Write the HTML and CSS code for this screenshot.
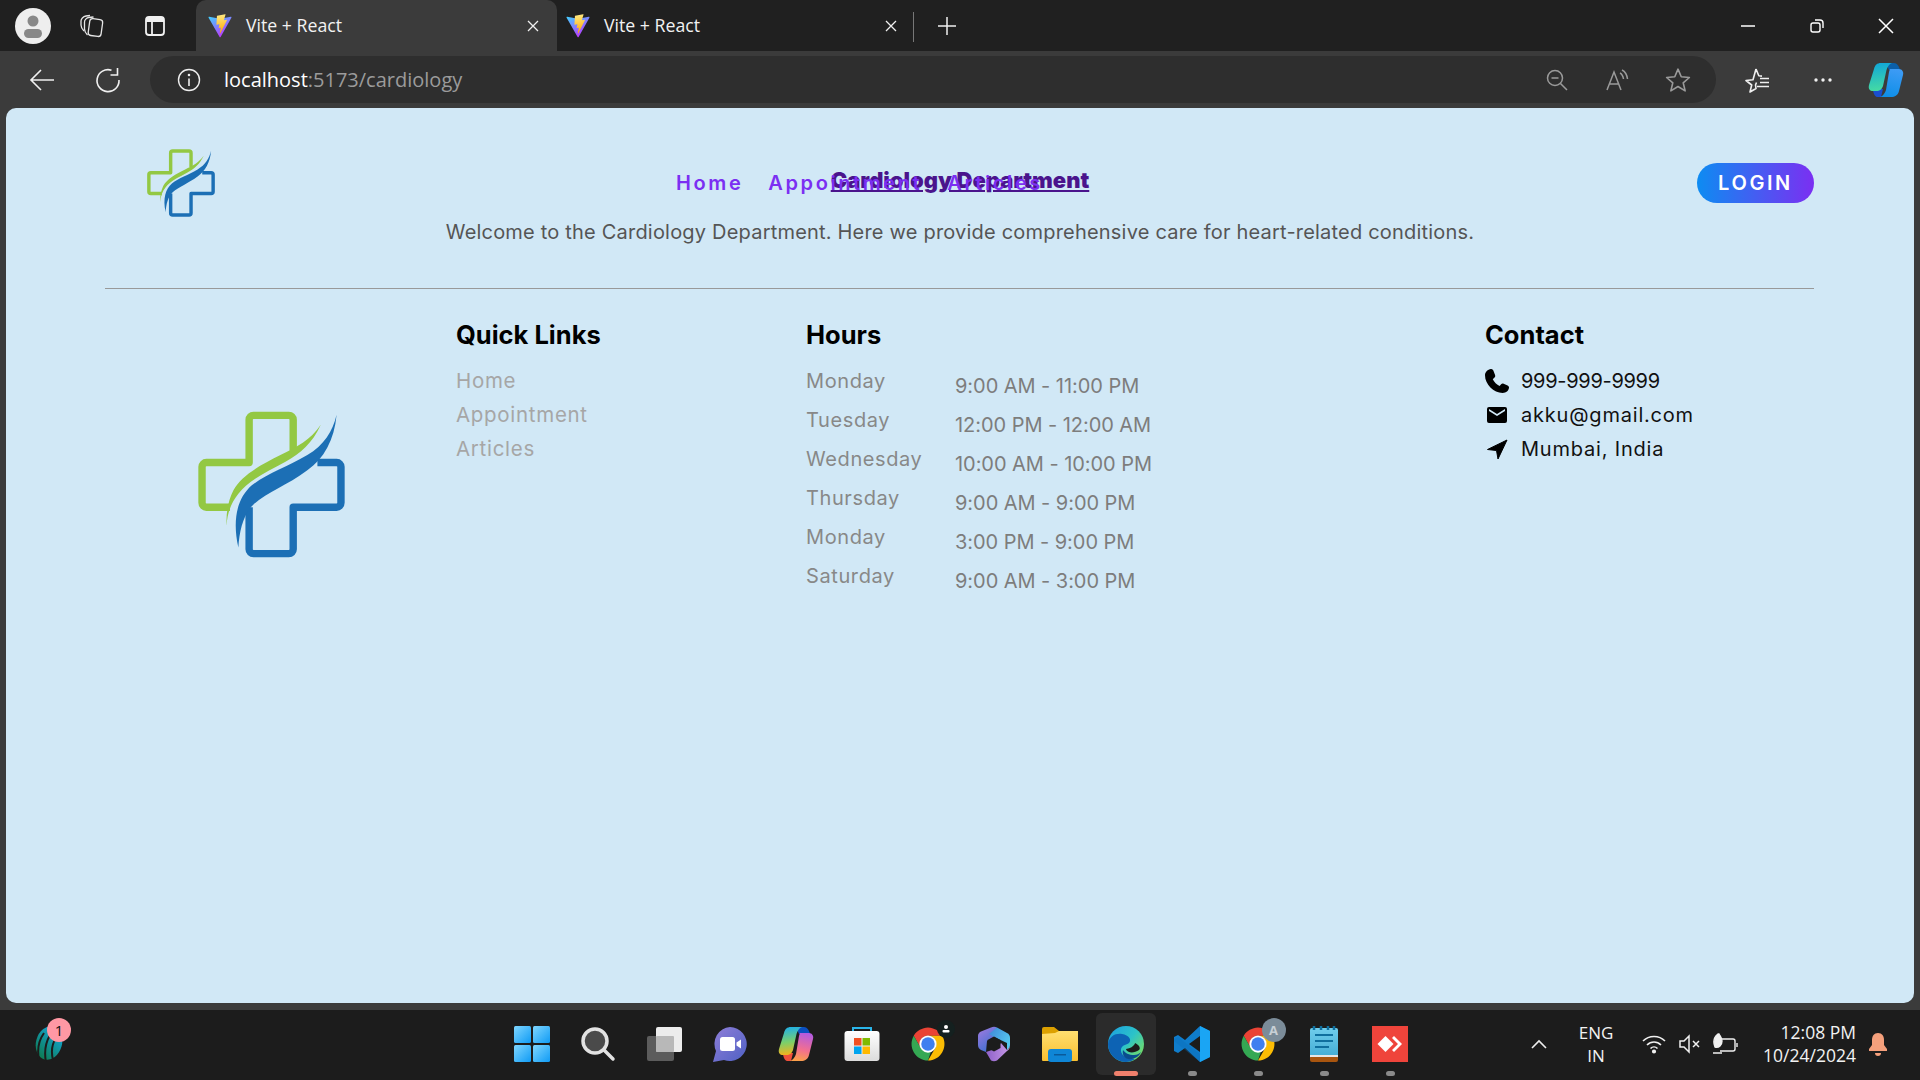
FILE: index.html
```html
<!DOCTYPE html>
<html lang="en">
<head>
  <meta charset="UTF-8" />
  <title>Vite + React</title>
  <link rel="stylesheet" href="styles.css">
</head>
<body>

  <!-- shared icon shapes -->
  <svg class="sprite" aria-hidden="true">
    <defs>
      <linearGradient id="viteA" x1="0" y1="0" x2="0.6" y2="1"><stop offset="0" stop-color="#41d1ff"/><stop offset="1" stop-color="#bd34fe"/></linearGradient>
      <linearGradient id="viteB" x1="0.4" y1="0" x2="0.5" y2="1"><stop offset="0" stop-color="#ffea83"/><stop offset="1" stop-color="#ffa800"/></linearGradient>
      <linearGradient id="winG" x1="0" y1="0" x2="1" y2="1"><stop offset="0" stop-color="#7fd6ff"/><stop offset="1" stop-color="#0f9bf5"/></linearGradient>
      <linearGradient id="meetG" x1="0" y1="0" x2="1" y2="1"><stop offset="0" stop-color="#8f7ed8"/><stop offset="1" stop-color="#4f61c4"/></linearGradient>
      <linearGradient id="copA" x1="0.3" y1="0" x2="0.4" y2="1"><stop offset="0" stop-color="#1fb0e8"/><stop offset="0.55" stop-color="#7bd06a"/><stop offset="1" stop-color="#f5b21c"/></linearGradient>
      <linearGradient id="copB" x1="0.6" y1="0" x2="0.4" y2="1"><stop offset="0" stop-color="#b35be0"/><stop offset="0.6" stop-color="#f4708e"/><stop offset="1" stop-color="#fba04a"/></linearGradient>
      <linearGradient id="copC" x1="0.3" y1="0" x2="0.4" y2="1"><stop offset="0" stop-color="#10a7d8"/><stop offset="1" stop-color="#46dba2"/></linearGradient>
      <linearGradient id="copD" x1="0.6" y1="0" x2="0.4" y2="1"><stop offset="0" stop-color="#3d9bf5"/><stop offset="1" stop-color="#0f8fe8"/></linearGradient>
      <linearGradient id="storeG" x1="0" y1="0" x2="0" y2="1"><stop offset="0" stop-color="#ffffff"/><stop offset="1" stop-color="#dcdcdc"/></linearGradient>
      <linearGradient id="m365A" x1="0" y1="0" x2="0.6" y2="1"><stop offset="0" stop-color="#a57be0"/><stop offset="1" stop-color="#3d6fd0"/></linearGradient>
      <linearGradient id="m365B" x1="0" y1="0" x2="1" y2="0.6"><stop offset="0" stop-color="#3f86d8"/><stop offset="1" stop-color="#55c8ee"/></linearGradient>
      <linearGradient id="m365C" x1="0" y1="0.5" x2="1" y2="0.5"><stop offset="0" stop-color="#8d5fc8"/><stop offset="1" stop-color="#c99be8"/></linearGradient>
      <linearGradient id="folderG" x1="0" y1="0" x2="0" y2="1"><stop offset="0" stop-color="#ffdf70"/><stop offset="1" stop-color="#f9bf30"/></linearGradient>
      <linearGradient id="edgeG" x1="0" y1="0" x2="1" y2="0.8"><stop offset="0" stop-color="#1b9de2"/><stop offset="0.55" stop-color="#2cc3c8"/><stop offset="1" stop-color="#7ade5c"/></linearGradient>
      <linearGradient id="padG" x1="0" y1="0" x2="0" y2="1"><stop offset="0" stop-color="#6fcdec"/><stop offset="1" stop-color="#3fa9d2"/></linearGradient>
      <linearGradient id="leafG" x1="0.7" y1="0" x2="0.3" y2="1"><stop offset="0" stop-color="#13a9e0"/><stop offset="1" stop-color="#0e7a50"/></linearGradient>

      <symbol id="vite" viewBox="0 0 410 404">
        <path fill="url(#viteA)" d="M399.641 59.525L215.643 388.545C211.844 395.338 202.084 395.378 198.228 388.618L10.582 59.556C6.381 52.19 12.68 43.266 21.028 44.759L205.223 77.682C206.398 77.892 207.601 77.89 208.776 77.676L389.119 44.806C397.439 43.289 403.768 52.143 399.641 59.525Z"/>
        <path fill="url(#viteB)" d="M292.965 1.574L156.801 28.255C154.563 28.694 152.906 30.59 152.771 32.866L144.395 174.33C144.198 177.662 147.258 180.248 150.51 179.498L188.42 170.749C191.967 169.931 195.172 173.055 194.443 176.622L183.18 231.775C182.422 235.487 185.907 238.661 189.532 237.56L212.947 230.446C216.577 229.344 220.065 232.527 219.297 236.242L201.398 322.875C200.278 328.294 207.486 331.249 210.492 326.603L212.5 323.5L323.454 102.072C325.312 98.365 322.108 94.137 318.036 94.923L279.014 102.454C275.347 103.161 272.227 99.746 273.262 96.158L298.731 7.867C299.767 4.273 296.636 0.855 292.965 1.574Z"/>
      </symbol>

      <symbol id="cross" viewBox="85 65 437 435">
        <path fill="none" stroke="#93c843" stroke-width="22" stroke-linejoin="round" d="M368 182V90a13 13 0 0 0-13-13H250a13 13 0 0 0-13 13V217H110a13 13 0 0 0-13 13V337a13 13 0 0 0 13 13H180"/>
        <path fill="none" stroke="#1c6fb5" stroke-width="22" stroke-linejoin="round" d="M440 217H497a13 13 0 0 1 13 13V337a13 13 0 0 1-13 13H368V475a13 13 0 0 1-13 13H250a13 13 0 0 1-13-13V350"/>
        <path fill="#1c6fb5" d="M497 75C485 125 460 165 410 195C350 230 290 250 245 285C205 320 185 380 205 470C208 420 220 370 250 342C290 305 350 285 410 240C460 205 490 150 497 75Z"/>
        <path fill="#93c843" d="M450 105C420 150 380 170 330 195C270 225 215 255 190 300C175 330 168 365 170 405C172 365 185 335 205 310C235 270 290 245 345 215C390 190 425 160 450 105Z"/>
      </symbol>

      <symbol id="chrome" viewBox="0 0 48 48">
        <path fill="#ea4335" d="M5 13A22 22 0 0 1 43 13H24A11 11 0 0 0 14.5 29.5Z"/>
        <path fill="#34a853" d="M5 13L14.5 29.5A11 11 0 0 0 28 34L24 46A22 22 0 0 1 5 13Z"/>
        <path fill="#fbbc04" d="M43 13A22 22 0 0 1 24 46L33.5 29.5A11 11 0 0 0 24 13Z"/>
        <circle cx="24" cy="24" r="11.5" fill="#fff"/>
        <circle cx="24" cy="24" r="9" fill="#3f7ff0"/>
      </symbol>
    </defs>
  </svg>

  <!-- Tab strip -->
  <div class="tabstrip">
    <div class="profile">
      <svg viewBox="0 0 36 36" width="36" height="36"><circle cx="18" cy="18" r="18" fill="#eee"/><circle cx="18" cy="13" r="5.5" fill="#888"/><rect x="9" y="21" width="18" height="9" rx="4.5" fill="#888"/></svg>
    </div>
    <div class="strip-btn">
      <svg viewBox="0 0 26 26" width="26" height="26" fill="none" stroke="#e6e6e6" stroke-width="1.3"><rect x="10" y="6" width="13" height="17" rx="3" transform="rotate(8 16 14)"/><path d="M8.500 22C6.500 20 5.500 18 5.500 16V9c0-2 2-4 4-4.500l5-.5"/><path d="M5 18C3 16 2 14 2 12V8c0-2 2-4.500 5-5l4-.5"/></svg>
    </div>
    <div class="strip-btn">
      <svg viewBox="0 0 24 24" width="24" height="24" fill="none" stroke="#f0f0f0" stroke-width="1.8"><rect x="3" y="3" width="18" height="18" rx="3"/><path d="M3 6h18" stroke-width="4"/><path d="M9 7v14"/></svg>
    </div>
    <div class="tab tab-active">
      <svg class="tab-icon" width="24" height="24"><use href="#vite"/></svg>
      <span class="tab-title">Vite + React</span>
      <svg class="tab-close" viewBox="0 0 12 12" width="12" height="12" stroke="#f0f0f0" stroke-width="1.3"><path d="M1 1l10 10M11 1L1 11"/></svg>
    </div>
    <div class="tab tab-idle">
      <svg class="tab-icon" width="24" height="24"><use href="#vite"/></svg>
      <span class="tab-title">Vite + React</span>
      <svg class="tab-close" viewBox="0 0 12 12" width="12" height="12" stroke="#f0f0f0" stroke-width="1.3"><path d="M1 1l10 10M11 1L1 11"/></svg>
    </div>
    <div class="new-tab">
      <svg viewBox="0 0 20 20" width="20" height="20" stroke="#f0f0f0" stroke-width="1.5"><path d="M10 1v18M1 10h18"/></svg>
    </div>
    <div class="window-btns">
      <div class="win-btn"><svg viewBox="0 0 16 16" width="16" height="16" stroke="#fff" stroke-width="1.5"><path d="M1 8h14"/></svg></div>
      <div class="win-btn"><svg viewBox="0 0 16 16" width="16" height="16" fill="none" stroke="#fff" stroke-width="1.4"><rect x="2" y="5" width="9" height="9" rx="2"/><path d="M6 2h5a3 3 0 0 1 3 3v5"/></svg></div>
      <div class="win-btn"><svg viewBox="0 0 16 16" width="16" height="16" stroke="#fff" stroke-width="1.5"><path d="M1 1l14 14M15 1L1 15"/></svg></div>
    </div>
  </div>

  <!-- Address bar -->
  <div class="toolbar">
    <div class="tool-btn tool-back">
      <svg viewBox="0 0 26 26" width="26" height="26" fill="none" stroke="#f0f0f0" stroke-width="1.6"><path d="M25 13H2M12 3L2 13l10 10"/></svg>
    </div>
    <div class="tool-btn tool-reload">
      <svg viewBox="0 0 26 26" width="26" height="26" fill="none" stroke="#f0f0f0" stroke-width="1.6"><path d="M16.500 3.200A11 11 0 1 0 24 13"/><path d="M22.500 1v7h-7"/></svg>
    </div>
    <div class="address">
      <svg class="addr-info" viewBox="0 0 24 24" width="24" height="24" fill="none" stroke="#eee" stroke-width="1.4"><circle cx="12" cy="12" r="10.5"/><path d="M12 10.500V18" stroke-width="1.6"/><circle cx="12" cy="7" r="0.6" fill="#eee"/></svg>
      <span class="addr-text">localhost<span class="addr-dim">:5173/cardiology</span></span>
      <div class="addr-actions">
        <svg viewBox="0 0 24 24" width="24" height="24" fill="none" stroke="#9a9a9a" stroke-width="1.5"><circle cx="10" cy="10" r="7.5"/><path d="M6.500 10h7M15.500 15.500L22 22"/></svg>
        <svg viewBox="0 0 24 24" width="24" height="24" fill="none" stroke="#9a9a9a" stroke-width="1.5"><path d="M2 22L9 4l7 18M4.500 16h9"/><path d="M15 5c2 1 3 3 3.500 6M17 2c3 1.500 5 5 5.500 9"/></svg>
        <svg viewBox="0 0 24 24" width="26" height="26" fill="none" stroke="#9a9a9a" stroke-width="1.5" stroke-linejoin="round"><path d="M12 2l3 7 7.500.7-5.700 4.900 1.800 7.400L12 18l-6.600 4 1.800-7.400L1.500 9.700 9 9z"/></svg>
      </div>
    </div>
    <div class="tool-btn tool-fav">
      <svg viewBox="0 0 26 26" width="26" height="26" fill="none" stroke="#f0f0f0" stroke-width="1.6" stroke-linejoin="round"><path d="M11 2l2.800 6.800 3.200.3M11.500 15.500l-1 2.500 .5 3.500-6 3.500 1.700-7L1 13.500l7-.7L11 2"/><path d="M15 11.500h9M15 15.500h9M12 19.500h12"/></svg>
    </div>
    <div class="tool-btn tool-more">
      <svg viewBox="0 0 20 6" width="20" height="6" fill="#f0f0f0"><circle cx="3" cy="3" r="1.7"/><circle cx="10" cy="3" r="1.7"/><circle cx="17" cy="3" r="1.7"/></svg>
    </div>
    <div class="tool-btn tool-copilot">
      <svg viewBox="0 0 36 36" width="36" height="36"><path fill="#0b5fa8" d="M18 1H26C29 1 31 4 32 8H21z"/><path fill="#1a4fd0" d="M5 27H15L13 35H9C7 35 5 31 5 27z"/><path fill="url(#copC)" d="M13 1H24C21 2 19.500 5 18.500 8L15 24C14 27 12 29 8 29H5C2 29 0 27 1 23L6 7C7 3 9 1 13 1Z"/><path fill="url(#copD)" d="M22 7H31C34 7 36 10 35 13L31 29C30 33 27 35 23 35H12C15 34 17 31 18 28L21 10C21.500 8.500 21.500 7.500 22 7Z"/></svg>
    </div>
  </div>

  <!-- Page -->
  <div class="viewport">
    <div class="page">

      <header class="site-header">
        <svg class="header-logo" width="68" height="68"><use href="#cross"/></svg>
        <nav class="site-nav">
          <a>Home</a>
          <a>Appointment</a>
          <a>Articles</a>
        </nav>
        <button class="login">LOGIN</button>
      </header>

      <section class="department">
        <h1>Cardiology Department</h1>
        <p>Welcome to the Cardiology Department. Here we provide comprehensive care for heart-related conditions.</p>
      </section>

      <footer class="site-footer">
        <div class="footer-logo">
          <svg width="147" height="147"><use href="#cross"/></svg>
        </div>
        <div>
          <h3>Quick Links</h3>
          <ul class="quick-links">
            <li>Home</li>
            <li>Appointment</li>
            <li>Articles</li>
          </ul>
        </div>
        <div>
          <h3>Hours</h3>
          <div class="hours">
            <span class="day">Monday</span><span class="time">9:00 AM - 11:00 PM</span>
            <span class="day">Tuesday</span><span class="time">12:00 PM - 12:00 AM</span>
            <span class="day">Wednesday</span><span class="time">10:00 AM - 10:00 PM</span>
            <span class="day">Thursday</span><span class="time">9:00 AM - 9:00 PM</span>
            <span class="day">Monday</span><span class="time">3:00 PM - 9:00 PM</span>
            <span class="day">Saturday</span><span class="time">9:00 AM - 3:00 PM</span>
          </div>
        </div>
        <div>
          <h3>Contact</h3>
          <ul class="contact">
            <li class="phone">
              <svg viewBox="1.500 1.500 21 21" width="24" height="24" fill="#000"><path d="M6.600 1.500C4 2 1.500 4 1.500 7c0 8 7.500 15.500 15.500 15.500 3 0 5.200-2 5.500-4.500.1-.9-.4-1.600-1.200-2l-3.500-1.600c-.8-.4-1.600-.2-2.200.5l-1.300 1.500c-2.500-1.200-4.800-3.500-6-6l1.500-1.400c.6-.6.8-1.400.5-2.200L8.800 2.800c-.4-.9-1.200-1.400-2.200-1.300z"/></svg>
              999-999-9999
            </li>
            <li>
              <svg viewBox="0 0 24 24" width="24" height="24" fill="#000"><path d="M4 4h16a2 2 0 0 1 2 2v12a2 2 0 0 1-2 2H4a2 2 0 0 1-2-2V6a2 2 0 0 1 2-2zm0 4l8 5 8-5V6l-8 5-8-5z"/></svg>
              akku@gmail.com
            </li>
            <li>
              <svg viewBox="0 0 24 24" width="24" height="24" fill="#000" stroke="#000" stroke-width="1" stroke-linejoin="round"><path d="M22 3L2.500 12.500l9 1 1.500 8.500z"/></svg>
              Mumbai, India
            </li>
          </ul>
        </div>
      </footer>

    </div>
  </div>

  <!-- Taskbar -->
  <div class="taskbar">
    <div class="task-left">
      <div class="widget">
        <svg viewBox="0 0 32 36" width="32" height="36"><ellipse cx="16" cy="17" rx="13" ry="17" transform="rotate(15 16 17)" fill="url(#leafG)"/><path d="M11 7C6 14 4 24 6 34M17 9c-4 7-6 17-4 27M23 12c-4 6-5 14-3 22" fill="none" stroke="#1c1c1c" stroke-width="2"/></svg>
        <span class="badge">1</span>
      </div>
    </div>

    <div class="task-center">
      <div class="task-item">
        <svg viewBox="0 0 36 36" width="36" height="36" fill="url(#winG)"><rect x="0" y="0" width="17" height="17" rx="1.5"/><rect x="19" y="0" width="17" height="17" rx="1.5"/><rect x="0" y="19" width="17" height="17" rx="1.5"/><rect x="19" y="19" width="17" height="17" rx="1.5"/></svg>
      </div>
      <div class="task-item">
        <svg viewBox="0 0 36 36" width="36" height="36" fill="#4a4a4a" stroke="#e2e2e2" stroke-width="3.5"><circle cx="15" cy="15" r="12"/><path d="M24 24l9 9" stroke-linecap="round"/></svg>
      </div>
      <div class="task-item">
        <svg viewBox="0 0 36 36" width="36" height="36"><rect x="1" y="10" width="27" height="25" rx="2" fill="#5c5c5c"/><rect x="10" y="1" width="26" height="25" rx="2" fill="#ececec"/><rect x="10" y="10" width="18" height="16" rx="1" fill="#b8b8b8"/></svg>
      </div>
      <div class="task-item">
        <svg viewBox="0 0 36 36" width="36" height="36"><path fill="url(#meetG)" d="M18 1a17 17 0 1 1-6 33L1 36l3-11A17 17 0 0 1 18 1z"/><rect x="8" y="11" width="15" height="14" rx="2.5" fill="#fff"/><path fill="#fff" d="M24.500 16.500l4.500-3v9l-4.500-3z"/></svg>
      </div>
      <div class="task-item">
        <svg viewBox="0 0 36 36" width="36" height="36"><path fill="#0b4fc0" d="M18 1H26C29 1 31 4 32 8H21z"/><path fill="#f0503c" d="M5 27H15L13 35H9C7 35 5 31 5 27z"/><path fill="url(#copA)" d="M13 1H24C21 2 19.500 5 18.500 8L15 24C14 27 12 29 8 29H5C2 29 0 27 1 23L6 7C7 3 9 1 13 1Z"/><path fill="url(#copB)" d="M22 7H31C34 7 36 10 35 13L31 29C30 33 27 35 23 35H12C15 34 17 31 18 28L21 10C21.500 8.500 21.500 7.500 22 7Z"/></svg>
      </div>
      <div class="task-item">
        <svg viewBox="0 0 36 36" width="36" height="36"><path d="M9 8V2h18v6" fill="none" stroke="#2ab5ea" stroke-width="2"/><rect x="0.5" y="5" width="35" height="30" rx="3" fill="url(#storeG)"/><rect x="10" y="12" width="7.5" height="7.5" fill="#f25022"/><rect x="18.5" y="12" width="7.5" height="7.5" fill="#7fba00"/><rect x="10" y="20.5" width="7.5" height="7.5" fill="#00a4ef"/><rect x="18.5" y="20.5" width="7.5" height="7.5" fill="#ffb900"/></svg>
      </div>
      <div class="task-item">
        <svg width="36" height="36"><use href="#chrome"/></svg>
        <svg class="task-overlay chrome-person" viewBox="0 0 18 18" width="18" height="18"><circle cx="9" cy="9" r="9" fill="#14201f"/><circle cx="9" cy="7" r="2" fill="#fff"/><rect x="5.5" y="10" width="7" height="2.500" rx="1" fill="#fff"/></svg>
      </div>
      <div class="task-item">
        <svg viewBox="0 0 32 36" width="32" height="36"><path fill="url(#m365A)" d="M13 1.500C15 .5 17 .5 19 1.500L16 11 9 15 8 26 3 24C1 23 0 21 0 19V10C0 8 1 6.500 3 5.500z"/><path fill="url(#m365B)" d="M19 1.500L29 7C31 8 32 9.500 32 12V19C32 21 31 22 29 24V17L16 11 11 8z"/><path fill="url(#m365C)" d="M8 26L17 23 23 17 29 24C31 22 32 21 32 19 32 22 31 24 29 25L19 34.500C17 35.500 15 35.500 13 34.500z"/><path fill="#1c1c1c" d="M16 10.500L22.500 14V22L16 25.500 9.500 22V14z"/></svg>
      </div>
      <div class="task-item">
        <svg viewBox="0 0 36 36" width="36" height="36"><path fill="#dca000" d="M0 3a2 2 0 0 1 2-2h10l5 4h19v8H0z"/><path fill="url(#folderG)" d="M0 8l13-1 4-2h19v29a1 1 0 0 1-1 1H1a1 1 0 0 1-1-1z"/><rect x="6" y="23" width="24" height="13" rx="3" fill="#0f86d6"/><rect x="12" y="28" width="12" height="1.5" fill="#0a5a9a"/></svg>
      </div>
      <div class="task-item task-active">
        <svg viewBox="0 0 36 36" width="36" height="36"><circle cx="18" cy="18" r="18" fill="url(#edgeG)"/><path fill="#0d63b4" d="M0 18C1 10 8 7 14 8c7 1 10 6 7 9-3 2-7 2-8 6-1 5 5 11 14 10-3 2-6 3-9 3C8 36 0 28 0 18z"/><path fill="#1c1c1c" d="M18 21c3-1 5-1 7-3 1-1 2-2 2-3 2 1 3 2 4 3 1 2 1 3 0 4-3 2-7 3-10 2-2-1-3-2-3-3z" transform="translate(0 2)"/><path fill="#0a4c8e" d="M15 24c2 3 6 5 11 5 3 0 5-1 7-3-2 5-8 8-13 7-4-1-6-5-5-9z"/></svg>
        <span class="run-mark run-on"></span>
      </div>
      <div class="task-item">
        <svg viewBox="0 0 36 36" width="36" height="36"><path fill="#0f7ccb" d="M26 0l10 5v26l-10 5-15-14-7 5-4-2V11l4-2 7 5z"/><path fill="#1aa5f4" d="M26 0l10 5v26l-10 5z"/><path fill="#1c1c1c" d="M26 10L15 18l11 8z"/><path fill="#0b6cb8" d="M0 13l4-2 22 17v8L0 15z" opacity="0.35"/></svg>
        <span class="run-mark"></span>
      </div>
      <div class="task-item">
        <svg width="36" height="36"><use href="#chrome"/></svg>
        <span class="task-overlay chrome-a">A</span>
        <span class="run-mark"></span>
      </div>
      <div class="task-item">
        <svg viewBox="0 0 28 36" width="28" height="36"><rect x="0" y="2" width="28" height="32" rx="2" fill="url(#padG)"/><rect x="0" y="30" width="28" height="6" rx="2" fill="#a8550f"/><rect x="0" y="29" width="28" height="2" fill="#e6e6e6"/><path d="M5 9h18M5 15h18M5 21h14" stroke="#0f6f9e" stroke-width="2"/><path d="M4 0v4M11 0v4M18 0v4M24 0v4" stroke="#0f6f9e" stroke-width="2.5"/></svg>
        <span class="run-mark"></span>
      </div>
      <div class="task-item">
        <svg viewBox="0 0 36 36" width="36" height="36"><rect width="36" height="36" fill="#ef443b"/><path fill="#fff" d="M13.500 10l8 8-8 8-8-8z"/><path fill="#fff" d="M22 10l8 8-8 8-2-2 6-6-6-6z"/></svg>
        <span class="run-mark"></span>
      </div>
    </div>

    <div class="task-right">
      <svg class="tray-chevron" viewBox="0 0 16 10" width="16" height="10" fill="none" stroke="#eee" stroke-width="1.6"><path d="M1 9l7-7 7 7"/></svg>
      <div class="lang">ENG<br>IN</div>
      <svg class="tray-wifi" viewBox="0 0 24 20" width="24" height="20" fill="none" stroke="#f0f0f0" stroke-width="1.6"><path d="M1 7c6-6 16-6 22 0M5 11c4-4 10-4 14 0M8.500 14.500c2-2 5-2 7 0"/><circle cx="12" cy="17.500" r="1.3" fill="#f0f0f0"/></svg>
      <svg class="tray-sound" viewBox="0 0 24 20" width="24" height="20" fill="none" stroke="#f0f0f0" stroke-width="1.5"><path d="M2 7h4l5-5v16l-5-5H2z"/><path d="M15 7l6 6M21 7l-6 6"/></svg>
      <svg class="tray-battery" viewBox="0 0 26 22" width="26" height="22" fill="none" stroke="#f0f0f0" stroke-width="1.4"><path d="M10 6h11a2 2 0 0 1 2 2v8a2 2 0 0 1-2 2H8"/><path d="M25 10v4"/><path d="M1 20h9M6 1C2 4 1 9 3 14c4 1 7-2 7-6 0-3-2-5-3-7z" fill="#f0f0f0"/></svg>
      <div class="clock">12:08 PM<br>10/24/2024</div>
      <svg class="tray-bell" viewBox="0 0 20 24" width="20" height="24" fill="#f5a07c"><path d="M10 1c-4 0-6 3-6 7v5l-3 4v2h18v-2l-3-4V8c0-4-2-7-6-7z"/><path d="M7 21h6a3 3 0 0 1-6 0z"/></svg>
    </div>
  </div>

</body>
</html>
```

FILE: styles.css
```css
* {
  box-sizing: border-box;
}

html, body {
  margin: 0;
  height: 1080px;
  overflow: hidden;
}

body {
  display: flex;
  flex-direction: column;
  font-family: "Open Sans", "Liberation Sans", sans-serif;
  background: #1c1c1c;
}

.sprite {
  position: absolute;
  width: 0;
  height: 0;
}

/* Tab strip */
.tabstrip {
  display: flex;
  align-items: flex-end;
  height: 51px;
  padding-left: 15px;
  background: #202020;
  color: #f2f2f2;
  font-size: 17.7px;
}

.profile {
  display: flex;
  align-self: center;
  margin-right: 9px;
}

.strip-btn {
  display: flex;
  align-self: center;
  justify-content: center;
  width: 63px;
}

.tab {
  display: flex;
  align-items: center;
  height: 51px;
}

.tab-active {
  width: 361px;
  margin-left: 10px;
  padding: 0 18px 0 12px;
  background: #3b3b3b;
  border-radius: 10px 10px 0 0;
}

.tab-idle {
  width: 357px;
  padding: 0 17px 0 9px;
  position: relative;
}

.tab-idle::after {
  content: "";
  position: absolute;
  top: 12px;
  right: 0;
  width: 1px;
  height: 30px;
  background: #777;
}

.tab-icon {
  margin-right: 14px;
}

.tab-title {
  margin-bottom: 2px;
}

.tab-close {
  margin-left: auto;
}

.new-tab {
  display: flex;
  align-self: center;
  justify-content: center;
  width: 66px;
}

.window-btns {
  display: flex;
  align-self: center;
  margin-left: auto;
}

.win-btn {
  display: flex;
  justify-content: center;
  width: 69px;
}

/* Address bar */
.toolbar {
  display: flex;
  align-items: center;
  height: 57px;
  background: #3b3b3b;
  padding-left: 24px;
}

.tool-btn {
  display: flex;
  justify-content: center;
  flex-shrink: 0;
}

.tool-back {
  width: 36px;
}

.tool-reload {
  width: 76px;
  margin-left: 10px;
}

.address {
  display: flex;
  flex-shrink: 0;
  align-items: center;
  width: 1566px;
  height: 47px;
  padding-left: 27px;
  background: #2e2e2e;
  border-radius: 24px;
  margin-left: 4px;
  color: #fff;
}

.addr-text {
  margin: 0 0 1px 23px;
  font-size: 20px;
}

.addr-dim {
  color: #9b9b9b;
}

.addr-actions {
  display: flex;
  align-items: center;
  gap: 36px;
  margin-left: auto;
  padding-right: 25px;
}

.tool-fav {
  width: 84px;
}

.tool-more {
  width: 46px;
}

.tool-copilot {
  width: 74px;
  padding-left: 6px;
}

/* Page */
.viewport {
  flex: 1;
  padding: 0 6px 7px;
  background: #3b3b3b;
}

.page {
  position: relative;
  height: 100%;
  padding-top: 60px;
  background: #d1e8f6;
  border-radius: 10px;
  font-family: Inter, "Open Sans", sans-serif;
}

.site-header {
  position: absolute;
  top: 0;
  left: 0;
  right: 0;
  display: flex;
  align-items: center;
  height: 150px;
  padding: 0 100px 0 141px;
}

.site-nav {
  display: flex;
  gap: 25px;
  margin-left: 461px;
  font-size: 20px;
  font-weight: 600;
  letter-spacing: 2.6px;
  color: #7b2ff2;
}

.login {
  margin-left: auto;
  width: 117px;
  height: 40px;
  border: none;
  border-radius: 20px;
  background: linear-gradient(90deg, #0d8cf2, #7b2ff2);
  color: #fff;
  font-family: inherit;
  font-size: 20px;
  font-weight: 600;
  letter-spacing: 2.6px;
}

.department {
  text-align: center;
}

.department h1 {
  margin: 0;
  font-size: 22px;
  line-height: 24px;
  font-weight: 900;
  color: #4a148c;
  text-decoration: underline;
}

.department p {
  margin: 28px 0 0;
  font-size: 20px;
  line-height: 24px;
  letter-spacing: 0.2px;
  color: #555;
}

.site-footer {
  display: grid;
  grid-template-columns: 351px 350px 679px 1fr;
  margin: 44px 100px 0 99px;
  padding-top: 32px;
  border-top: 1px solid #999;
}

.site-footer h3 {
  margin: 0 0 20px;
  font-size: 25.5px;
  line-height: 28px;
  font-weight: 700;
  color: #000;
}

.footer-logo {
  padding: 90px 0 0 93px;
}

.quick-links, .contact {
  list-style: none;
  margin: 0;
  padding: 0;
  font-size: 20px;
  line-height: 24px;
}

.quick-links {
  font-size: 20.5px;
  letter-spacing: 0.7px;
  color: #a6a6a6;
}

.quick-links li, .contact li {
  height: 34px;
}

.contact {
  letter-spacing: 0.8px;
  color: #111;
}

.contact li {
  display: flex;
  gap: 12px;
}

.contact .phone {
  letter-spacing: -0.3px;
}

.hours {
  display: grid;
  grid-template-columns: 149px auto;
  grid-auto-rows: 39px;
  font-size: 20px;
  line-height: 24px;
}

.day {
  letter-spacing: 0.6px;
  color: #888;
}

.time {
  padding-top: 5px;
  letter-spacing: -0.05px;
  color: #7d7d7d;
}

/* Taskbar */
.taskbar {
  display: grid;
  grid-template-columns: 1fr auto 1fr;
  align-items: center;
  height: 70px;
  padding-bottom: 2px;
  background: #1c1c1c;
  color: #fff;
}

.task-left {
  padding-left: 33px;
}

.widget {
  position: relative;
  display: flex;
  width: 32px;
  height: 36px;
}

.badge {
  position: absolute;
  top: -8px;
  left: 14px;
  width: 24px;
  height: 24px;
  border-radius: 50%;
  background: #ff98a4;
  color: #111;
  font-size: 15px;
  line-height: 24px;
  text-align: center;
}

.task-center {
  display: flex;
  padding-left: 1px;
}

.task-item {
  position: relative;
  display: flex;
  align-items: center;
  justify-content: center;
  width: 66px;
  height: 62px;
}

.task-active {
  width: 60px;
  margin: 0 3px;
  background: #2b2b2b;
  border-radius: 6px;
}

.run-mark {
  position: absolute;
  bottom: -1px;
  left: 50%;
  width: 9px;
  height: 5px;
  margin-left: -4px;
  border-radius: 3px;
  background: #8a8a8a;
}

.run-on {
  width: 24px;
  margin-left: -12px;
  background: #f0806c;
}

.task-overlay {
  position: absolute;
}

.chrome-person {
  top: 7px;
  right: 6px;
}

.chrome-a {
  top: 5px;
  right: 5px;
  width: 24px;
  height: 24px;
  border-radius: 50%;
  background: #7b8c99;
  color: #c8d0d6;
  font-size: 13px;
  font-weight: 700;
  line-height: 24px;
  text-align: center;
}

.task-right {
  display: flex;
  align-items: center;
  justify-content: flex-end;
  padding-right: 32px;
  font-size: 17px;
  color: #f2f2f2;
}

.lang {
  width: 50px;
  margin: 0 21px 0 24px;
  text-align: center;
  line-height: 23px;
}

.tray-sound {
  margin-left: 12px;
}

.tray-battery {
  margin-left: 10px;
}

.clock {
  margin: 0 12px 0 25px;
  font-size: 17.5px;
  text-align: right;
  line-height: 23px;
}
```
